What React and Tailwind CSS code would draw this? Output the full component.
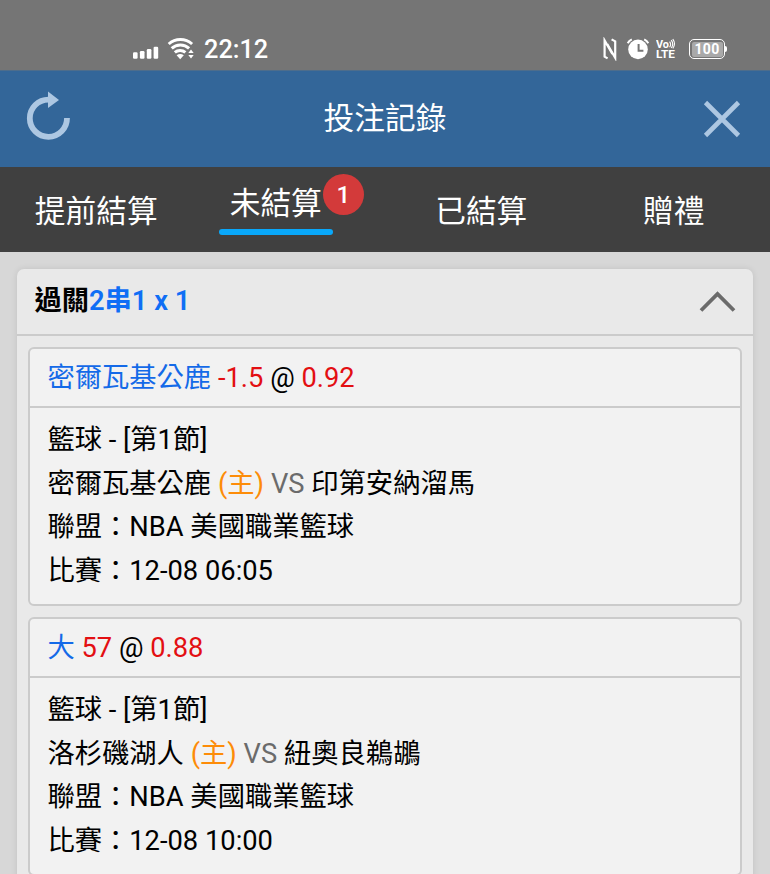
import React, { useState } from 'react';

const tabs = [
  { id: 'early', label: '提前結算' },
  { id: 'open', label: '未結算', count: 1 },
  { id: 'settled', label: '已結算' },
  { id: 'gift', label: '贈禮' }
];

const bets = [
  {
    pick: '密爾瓦基公鹿',
    line: '-1.5',
    odds: '0.92',
    sport: '籃球 - [第1節]',
    home: '密爾瓦基公鹿',
    away: '印第安納溜馬',
    league: 'NBA 美國職業籃球',
    time: '12-08 06:05'
  },
  {
    pick: '大',
    line: '57',
    odds: '0.88',
    sport: '籃球 - [第1節]',
    home: '洛杉磯湖人',
    away: '紐奧良鵜鶘',
    league: 'NBA 美國職業籃球',
    time: '12-08 10:00'
  }
];

const StatusBar = () => (
  <div className="flex h-[70px] items-end justify-between bg-[#757575] pr-[43px] pb-[9px] pl-[132px] text-white">
    <div className="flex h-6 items-center">
      <svg width="64" height="24" viewBox="0 0 64 24" fill="none">
        <g fill="currentColor">
          <rect x="1" y="15.3" width="4.6" height="6.4" rx="1.2" />
          <rect x="7.9" y="14" width="4.6" height="7.7" rx="1.2" />
          <rect x="14.8" y="12" width="4.6" height="9.7" rx="1.2" />
          <rect x="21.6" y="9.7" width="4.6" height="12" rx="1.2" />
        </g>
        <g stroke="currentColor" strokeWidth="3">
          <path d="M36.7 7a17.5 17.5 0 0 1 23.4 0" />
          <path d="M39.7 11.4a12.5 12.5 0 0 1 17.4 0" />
          <path d="M42.8 15.4a8 8 0 0 1 10.6 0" />
        </g>
        <path d="M44.6 18.2q3.6-2.4 7.2 0l-3.6 4z" fill="currentColor" />
        <path d="M56.3 16l2.7-3.6 2.7 3.6zM56.3 18l2.7 3.6 2.7-3.6z" fill="currentColor" />
      </svg>
      <span className="mt-[2px] ml-[8px] text-[25.3px] leading-6 font-medium">22:12</span>
    </div>
    <div className="flex h-6 items-center">
      <svg width="14" height="24" viewBox="0 0 14 24" fill="none" stroke="currentColor" strokeWidth="2.2">
        <path d="M4.6 21.4L1.6 19.6V3.4L9.4 17" />
        <path d="M8.6 2.4l3.6 2v16.4L4.2 7" />
      </svg>
      <svg className="ml-[9px]" width="24" height="24" viewBox="0 0 24 24" fill="none">
        <circle cx="12" cy="12.4" r="9.8" fill="currentColor" />
        <path d="M1.7 6.2Q3 3.7 5.8 2.4M22.3 6.2Q21 3.7 18.2 2.4" stroke="currentColor" strokeWidth="2" />
        <path d="M12.6 7v6.7h4.8" stroke="#757575" strokeWidth="2" />
      </svg>
      <svg className="ml-[6px]" width="20" height="24" viewBox="0 0 20 24" fill="none">
        <g fill="currentColor" className="text-[11px] font-bold">
          <text x="0" y="11" textLength="13" lengthAdjust="spacingAndGlyphs">Vo</text>
          <text x="0" y="21.4" textLength="19" lengthAdjust="spacingAndGlyphs" className="text-[11.5px]">LTE</text>
        </g>
        <path d="M13.6 4.6q2 2.8 0 5.6M15.2 3.2q3 4 0 7.8M16.8 2.2q3.4 4.6 0 9.2" stroke="currentColor" strokeWidth="1.1" />
      </svg>
      <div className="ml-[13px] flex items-center">
        <div className="flex h-[20px] w-[36px] items-center justify-center rounded-[5px] border-[1.5px] border-white p-[1.5px]">
          <span className="flex h-full w-full items-center justify-center rounded-[2px] bg-[#a9a9a9] text-[14px] leading-none font-bold tracking-[0.3px]">
            100
          </span>
        </div>
        <span className="h-[6px] w-[2px] rounded-r-sm bg-white" />
      </div>
    </div>
  </div>
);

const Header = () => (
  <header className="flex h-[97px] items-center justify-between border-t border-[#4d6d8c] bg-[#336699] px-[24px] text-[#adc7e2]">
    <button type="button" aria-label="refresh">
      <svg width="48" height="56" viewBox="0 0 48 56" fill="none">
        <path d="M24.5 8.6A18.6 18.6 0 1 0 43 27" stroke="currentColor" strokeWidth="5.8" />
        <path d="M24 0.5L35 8.9L24 17z" fill="currentColor" />
      </svg>
    </button>
    <h1 className="text-[30.7px] leading-none text-white">投注記錄</h1>
    <button type="button" aria-label="close">
      <svg width="48" height="48" viewBox="0 0 48 48" fill="none" stroke="currentColor" strokeWidth="4.6">
        <path d="M7.5 7.5l33 33M40.5 7.5l-33 33" />
      </svg>
    </button>
  </header>
);

const Tabs = ({ active, onChange }) => (
  <nav className="grid h-[85px] grid-cols-4 bg-[#404040] text-[30.7px] leading-none text-white">
    {tabs.map((tab) => (
      <button
        key={tab.id}
        type="button"
        onClick={() => onChange(tab.id)}
        className={`flex flex-col items-center justify-center pt-[5px] ${tab.count ? 'pr-[26px]' : ''}`}
      >
        <span className="relative">
          {tab.label}
          {tab.count && (
            <span className="absolute -top-[15px] left-[93px] flex h-[41px] w-[41px] items-center justify-center rounded-full bg-[#d33a3a] text-[24px] font-medium">
              {tab.count}
            </span>
          )}
        </span>
        {active === tab.id && (
          <span className="mt-[9px] h-[6px] w-[114px] rounded-full bg-[#09a8fa]" />
        )}
      </button>
    ))}
  </nav>
);

const BetCard = ({ bet }) => (
  <section className="rounded-[6px] border-2 border-[#cbcbcb] bg-[#f2f2f2] text-[27.3px] leading-[43.6px] text-black">
    <div className="h-[59px] border-b-2 border-[#cbcbcb] px-[17.4px] pt-[7.5px]">
      <span className="text-[#146ae8]">{bet.pick}</span> <span className="text-[#e30f12]">{bet.line}</span> @{' '}
      <span className="text-[#e30f12]">{bet.odds}</span>
    </div>
    <div className="h-[196px] px-[17.4px] pt-[11px]">
      <p>{bet.sport}</p>
      <p>
        {bet.home} <span className="text-[#fd8c08]">(主)</span> <span className="text-[#6b6b6b]">VS</span> {bet.away}
      </p>
      <p>聯盟：{bet.league}</p>
      <p>比賽：{bet.time}</p>
    </div>
  </section>
);

const App = () => {
  const [active, setActive] = useState('open');
  const [open, setOpen] = useState(true);

  return (
    <div className="h-[874px] w-[770px] overflow-hidden bg-[#d7d7d7] font-[Roboto,'Noto_Sans_CJK_TC',sans-serif]">
      <StatusBar />
      <Header />
      <Tabs active={active} onChange={setActive} />
      <main className="px-[17px] pt-[17px]">
        <div className="rounded-t-[7px] bg-[#e9e9e9] shadow-[0_0_6px_rgba(0,0,0,0.1)]">
          <div className="flex h-[67px] items-center justify-between border-b-2 border-[#cbcbcb] pr-[16px] pl-[17.5px]">
            <h2 className="text-[27.27px] leading-none font-semibold text-black">
              過關<span className="text-[#0f6ef5]">2串1 x 1</span>
            </h2>
            <button type="button" aria-label="toggle" onClick={() => setOpen(!open)}>
              <svg width="40" height="24" viewBox="0 0 40 24" fill="none" stroke="#6b6b6b" strokeWidth="3.8">
                <path d="M4 20.5L20.5 4L37 20.5" />
              </svg>
            </button>
          </div>
          {open && (
            <div className="flex flex-col gap-[11px] px-[11px] pt-[11px] pb-3">
              {bets.map((bet) => (
                <BetCard key={bet.pick} bet={bet} />
              ))}
            </div>
          )}
        </div>
      </main>
    </div>
  );
};

export default App;
